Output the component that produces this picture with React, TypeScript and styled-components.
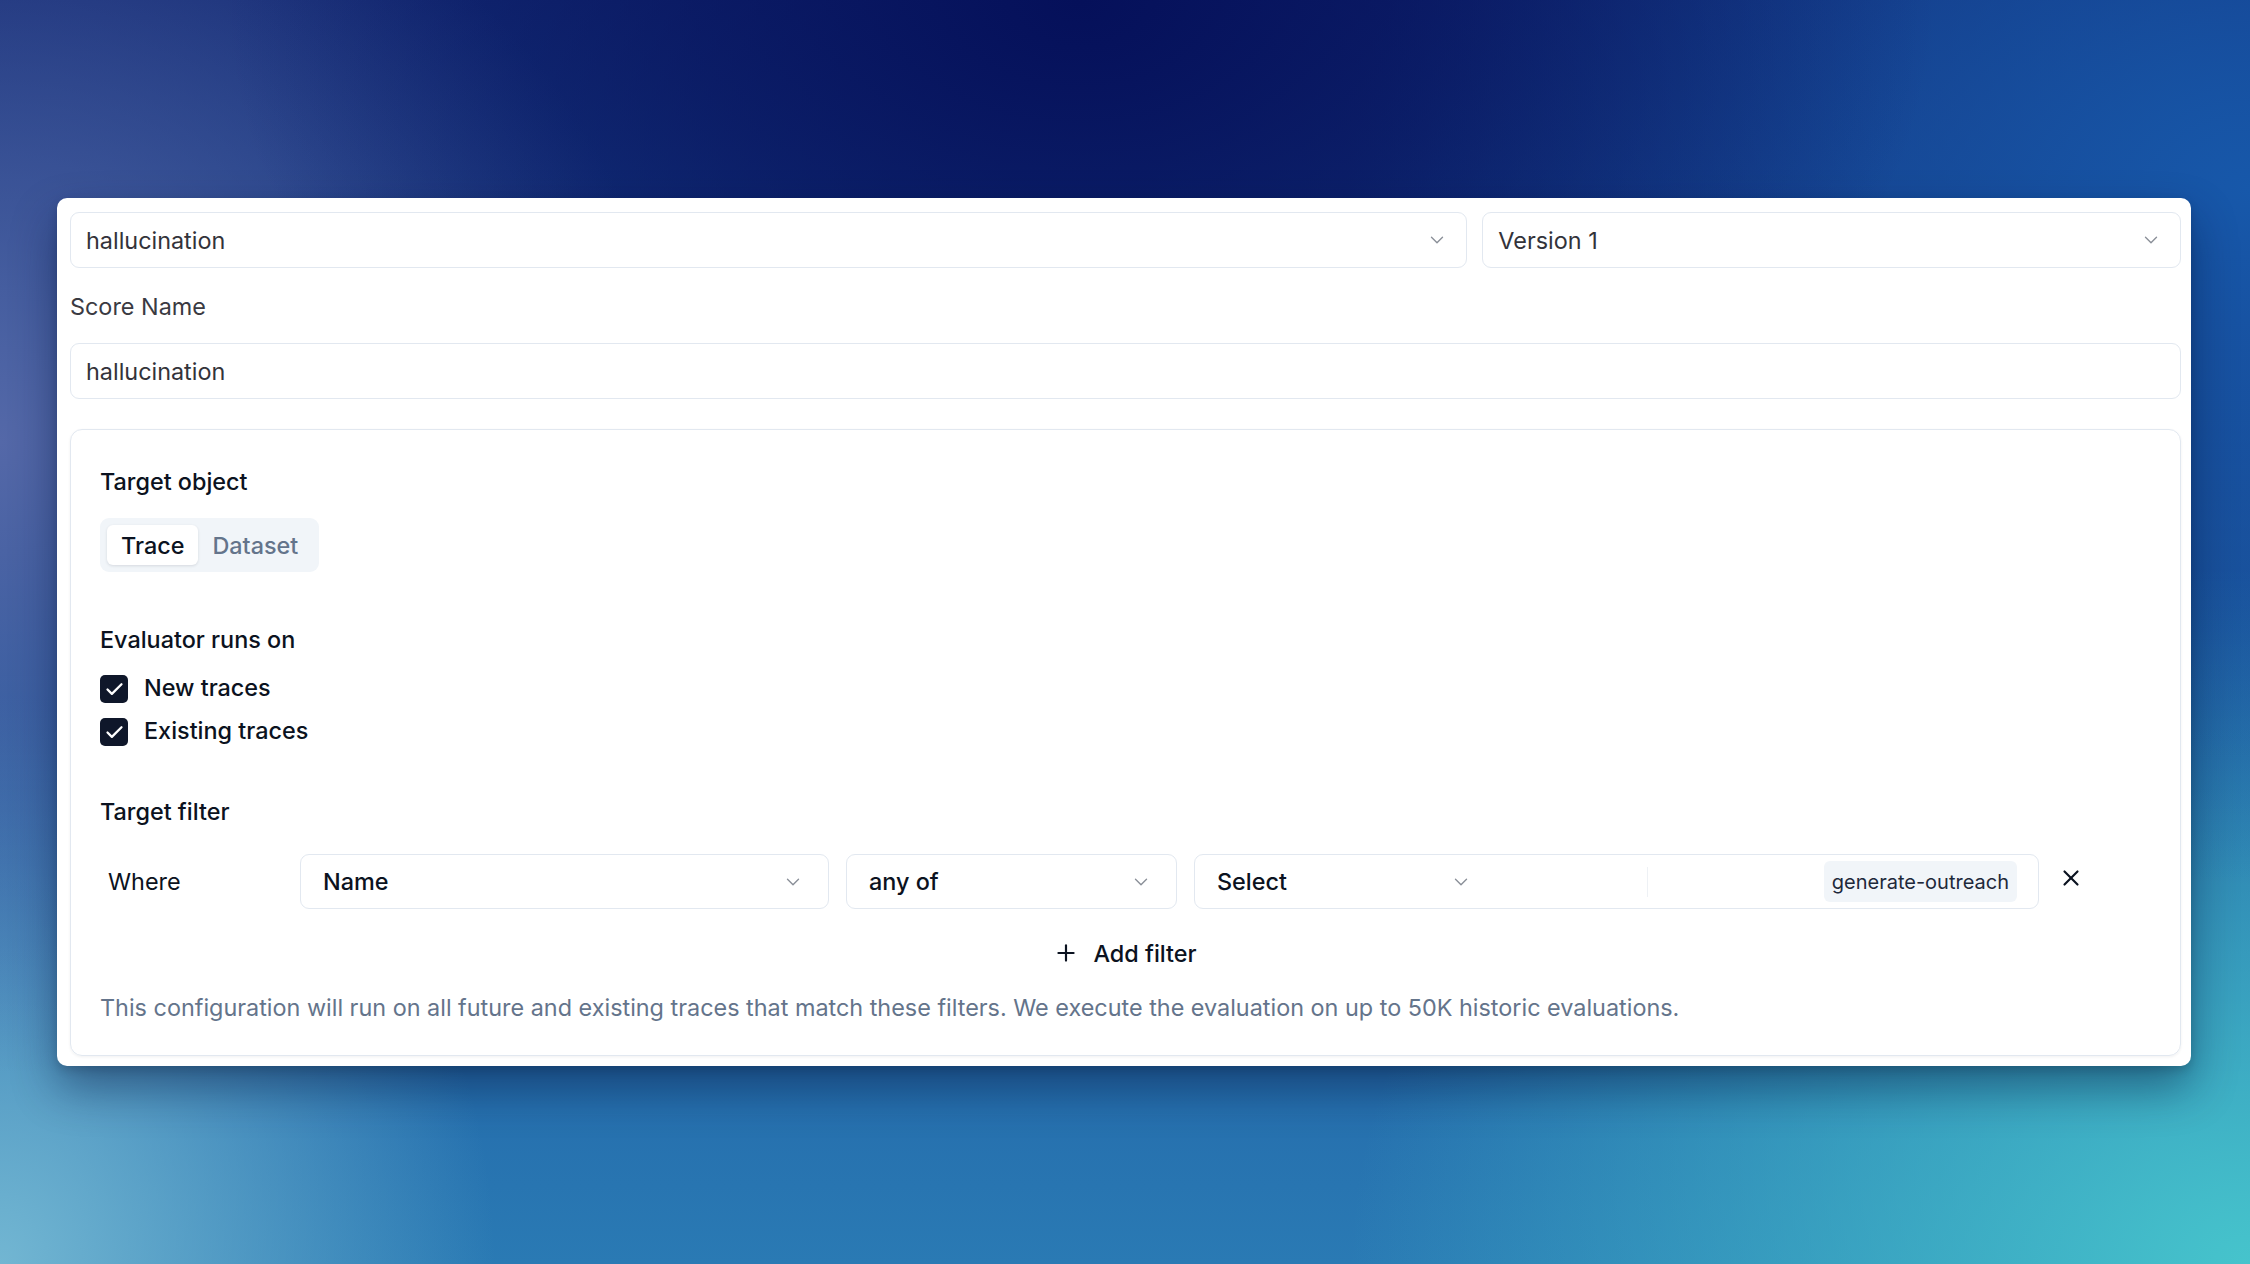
import React from "react";
import styled, { createGlobalStyle } from "styled-components";
import { ChevronDown, Check, X, Plus } from "lucide-react";

const Global = createGlobalStyle`
  html, body { margin: 0; padding: 0; }
  body {
    font-family: Inter, "Noto Sans", "Liberation Sans", sans-serif;
    -webkit-font-smoothing: antialiased;
  }
  * { box-sizing: border-box; }
`;

const Page = styled.div`
  width: 2250px;
  height: 1264px;
  overflow: hidden;
  padding: 198px 59px 0 57px;
  background:
    radial-gradient(ellipse 38% 48% at 48% 0%, #05105a 0%, rgba(5,16,90,0.6) 45%, rgba(5,16,90,0) 100%),
    radial-gradient(ellipse 30% 50% at 0% 35%, #5468a8 0%, rgba(84,104,168,0) 100%),
    radial-gradient(ellipse 40% 55% at 100% 15%, #1758aa 0%, rgba(23,88,170,0) 100%),
    radial-gradient(ellipse 22% 45% at 0% 100%, #72b6d2 0%, rgba(114,182,210,0) 100%),
    radial-gradient(ellipse 40% 55% at 100% 100%, #46c4cc 0%, rgba(70,196,204,0) 100%),
    linear-gradient(180deg, #132a74 0%, #1a4c92 45%, #2266a8 75%, #2a7ab4 100%);
`;

const Card = styled.div`
  width: 2134px;
  background: #ffffff;
  border-radius: 10px;
  padding: 14px 10px 10px 13px;
  box-shadow: 0 22px 45px rgba(5, 20, 60, 0.45), 0 4px 10px rgba(0, 0, 0, 0.15);
`;

const TopRow = styled.div`
  display: grid;
  grid-template-columns: 2fr 1fr;
  gap: 15px;
`;

const SelectBox = styled.div<{ $pr?: number }>`
  height: 56px;
  border: 1px solid #e2e8f0;
  border-radius: 9px;
  display: flex;
  align-items: center;
  justify-content: space-between;
  padding: 0 ${(p) => p.$pr ?? 20}px 0 15px;
  font-size: 23.4px;
  color: #33333a;
  background: #fff;
`;

const Chevron = styled(ChevronDown)`
  color: #8a8f98;
  flex-shrink: 0;
`;

const FieldLabel = styled.div`
  font-size: 23.4px;
  line-height: 33px;
  color: #3a3a42;
  margin: 22px 0 20px;
`;

const TextInput = styled.div`
  height: 56px;
  border: 1px solid #e2e8f0;
  border-radius: 9px;
  display: flex;
  align-items: center;
  padding: 0 15px;
  font-size: 23.4px;
  color: #33333a;
`;

const Panel = styled.div`
  margin-top: 30px;
  border: 1px solid #e2e8f0;
  border-radius: 12px;
  padding: 35px 30px 30px 29px;
  box-shadow: 0 1px 3px rgba(15, 23, 42, 0.06);
`;

const SectionTitle = styled.div<{ $mt?: number }>`
  font-size: 23.4px;
  line-height: 33px;
  font-weight: 500;
  color: #0b1220;
  margin-top: ${(p) => p.$mt ?? 0}px;
`;

const Tabs = styled.div`
  display: inline-flex;
  align-items: center;
  margin-top: 20px;
  height: 54px;
  padding: 0 7px;
  background: #f1f5f9;
  border-radius: 9px;
`;

const Tab = styled.div<{ $active?: boolean }>`
  height: 40px;
  display: flex;
  align-items: center;
  padding: 0 14px;
  font-size: 23.4px;
  font-weight: 500;
  border-radius: 6px;
  color: ${(p) => (p.$active ? "#0b1220" : "#64748b")};
  background: ${(p) => (p.$active ? "#ffffff" : "transparent")};
  box-shadow: ${(p) => (p.$active ? "0 1px 3px rgba(15,23,42,0.12)" : "none")};
`;

const CheckList = styled.div`
  display: flex;
  flex-direction: column;
  gap: 13px;
  margin-top: 16px;
`;

const CheckRow = styled.label`
  display: flex;
  align-items: center;
  gap: 16px;
  height: 30px;
  font-size: 23.4px;
  font-weight: 500;
  color: #0b1220;
`;

const CheckBox = styled.span`
  width: 28px;
  height: 28px;
  border-radius: 5px;
  background: #0f172a;
  display: flex;
  align-items: center;
  justify-content: center;
  color: #fff;
  margin-top: 4px;
`;

const FilterRow = styled.div`
  display: flex;
  align-items: center;
  margin-top: 26px;
  height: 55px;
`;

const WhereCell = styled.div`
  width: 200px;
  padding-left: 8px;
  font-size: 23.4px;
  color: #0b1220;
`;

const FilterSelect = styled.div<{ $w: number }>`
  width: ${(p) => p.$w}px;
  height: 55px;
  border: 1px solid #e2e8f0;
  border-radius: 9px;
  display: flex;
  align-items: center;
  justify-content: space-between;
  padding: 0 24px 0 22px;
  font-size: 23.4px;
  font-weight: 500;
  color: #0b1220;
  margin-right: 17px;
`;

const Compound = styled.div`
  width: 845px;
  height: 55px;
  border: 1px solid #e2e8f0;
  border-radius: 9px;
  display: flex;
  align-items: center;
  padding: 0 21px 0 22px;
`;

const CompoundTrigger = styled.div`
  width: 255px;
  display: flex;
  align-items: center;
  justify-content: space-between;
  font-size: 23.4px;
  font-weight: 500;
  color: #0b1220;
`;

const Divider = styled.div`
  width: 1px;
  height: 30px;
  background: #eef1f5;
  margin-left: 175px;
`;

const Chip = styled.div`
  margin-left: auto;
  height: 41px;
  padding: 0 8px;
  display: flex;
  align-items: center;
  border-radius: 6px;
  background: #f1f5f9;
  font-size: 20px;
  color: #1e293b;
`;

const RemoveButton = styled.div`
  width: 40px;
  height: 40px;
  margin-left: 12px;
  margin-top: -8px;
  display: flex;
  align-items: center;
  justify-content: center;
  color: #0b1220;
`;

const AddFilter = styled.div`
  display: flex;
  align-items: center;
  justify-content: center;
  gap: 14px;
  height: 44px;
  margin-top: 22px;
  font-size: 23.4px;
  font-weight: 500;
  color: #0b1220;
`;

const Description = styled.div`
  margin-top: 16px;
  font-size: 23.4px;
  line-height: 34px;
  color: #64748b;
`;

export default function App() {
  return (
    <>
      <Global />
      <Page>
        <Card>
          <TopRow>
            <SelectBox $pr={18}>
              <span>hallucination</span>
              <Chevron size={22} strokeWidth={1.5} />
            </SelectBox>
            <SelectBox $pr={18}>
              <span>Version 1</span>
              <Chevron size={22} strokeWidth={1.5} />
            </SelectBox>
          </TopRow>
          <FieldLabel>Score Name</FieldLabel>
          <TextInput>hallucination</TextInput>
          <Panel>
            <SectionTitle>Target object</SectionTitle>
            <Tabs>
              <Tab $active>Trace</Tab>
              <Tab>Dataset</Tab>
            </Tabs>
            <SectionTitle $mt={51}>Evaluator runs on</SectionTitle>
            <CheckList>
              <CheckRow>
                <CheckBox>
                  <Check size={21} strokeWidth={2.6} />
                </CheckBox>
                New traces
              </CheckRow>
              <CheckRow>
                <CheckBox>
                  <Check size={21} strokeWidth={2.6} />
                </CheckBox>
                Existing traces
              </CheckRow>
            </CheckList>
            <SectionTitle $mt={50}>Target filter</SectionTitle>
            <FilterRow>
              <WhereCell>Where</WhereCell>
              <FilterSelect $w={529}>
                <span>Name</span>
                <Chevron size={22} strokeWidth={1.5} />
              </FilterSelect>
              <FilterSelect $w={331}>
                <span>any of</span>
                <Chevron size={22} strokeWidth={1.5} />
              </FilterSelect>
              <Compound>
                <CompoundTrigger>
                  <span>Select</span>
                  <Chevron size={22} strokeWidth={1.5} />
                </CompoundTrigger>
                <Divider />
                <Chip>generate-outreach</Chip>
              </Compound>
              <RemoveButton>
                <X size={26} strokeWidth={2} />
              </RemoveButton>
            </FilterRow>
            <AddFilter>
              <Plus size={26} strokeWidth={2} />
              Add filter
            </AddFilter>
            <Description>
              This configuration will run on all future and existing traces that match these filters. We execute the evaluation on up to 50K historic evaluations.
            </Description>
          </Panel>
        </Card>
      </Page>
    </>
  );
}
